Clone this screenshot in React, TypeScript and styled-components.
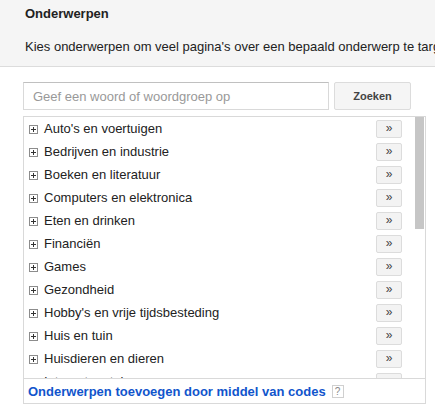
import styled, { createGlobalStyle } from 'styled-components';

const GlobalStyle = createGlobalStyle`
  html, body {
    margin: 0;
    padding: 0;
    background: #fff;
    overflow: hidden;
  }
  body {
    font-family: Arial, "Liberation Sans", sans-serif;
    color: #222;
  }
`;

const Page = styled.div`
  width: 435px;
  height: 412px;
  overflow: hidden;
`;

const Header = styled.div`
  background: #f5f5f5;
  border-bottom: 1px solid #dcdcdc;
  padding: 6px 0 10px 25px;
  height: 50px;
  white-space: nowrap;
`;

const Title = styled.div`
  font-size: 13px;
  font-weight: bold;
  line-height: 16px;
  color: #222;
`;

const Description = styled.div`
  margin-top: 17px;
  font-size: 13px;
  line-height: 16px;
  color: #222;
`;

const Content = styled.div`
  padding: 15px 0 0 23px;
`;

const SearchRow = styled.div`
  display: flex;
  gap: 5px;
  height: 28px;
`;

const SearchInput = styled.input`
  box-sizing: border-box;
  width: 306px;
  height: 28px;
  border: 1px solid #d9d9d9;
  border-top-color: #c0c0c0;
  padding: 0 9px;
  font-family: Arial, "Liberation Sans", sans-serif;
  font-size: 13px;
  color: #222;
  outline: none;

  &::placeholder {
    color: #999;
  }
`;

const SearchButton = styled.button`
  box-sizing: border-box;
  width: 77px;
  height: 28px;
  background: #f5f5f5;
  border: 1px solid #dcdcdc;
  border-radius: 2px;
  font-family: Arial, "Liberation Sans", sans-serif;
  font-size: 11px;
  font-weight: bold;
  color: #444;
  padding: 0;
`;

const ListBox = styled.div`
  margin-top: 6px;
  width: 403px;
  box-sizing: border-box;
  border: 1px solid #d9d9d9;
`;

const ListBody = styled.div`
  display: flex;
  height: 261px;
`;

const ScrollArea = styled.div`
  flex: 1;
  overflow-y: auto;
  scrollbar-width: none;

  &::-webkit-scrollbar {
    display: none;
  }
`;

const ScrollTrack = styled.div`
  flex: none;
  width: 10px;
  padding-right: 1px;
  box-sizing: border-box;
  background: #fff;
`;

const ScrollThumb = styled.div`
  height: 112px;
  background: #c6c6c6;
`;

const Row = styled.div`
  display: flex;
  align-items: center;
  height: 23px;
  padding: 0 13px 0 5px;
`;

const Expander = styled.svg`
  flex: none;
  width: 9px;
  height: 9px;
  margin-top: 2px;
`;

const Label = styled.span`
  flex: 1;
  margin-left: 6px;
  font-size: 13px;
  color: #222;
  white-space: nowrap;
`;

const AddButton = styled.button`
  box-sizing: border-box;
  width: 26px;
  height: 18px;
  padding: 0 0 2px;
  background: #f3f3f3;
  border: 1px solid #dcdcdc;
  border-radius: 2px;
  font-family: Arial, "Liberation Sans", sans-serif;
  font-size: 12px;
  line-height: 14px;
  color: #444;
`;

const Footer = styled.div`
  display: flex;
  align-items: center;
  gap: 6px;
  height: 24px;
  border-top: 1px solid #d9d9d9;
  padding-left: 4px;
`;

const CodeLink = styled.a`
  font-size: 13px;
  font-weight: bold;
  color: #1155cc;
  text-decoration: none;
  white-space: nowrap;
`;

const HelpBadge = styled.span`
  box-sizing: border-box;
  width: 12px;
  height: 13px;
  border: 1px solid #d0d0d0;
  font-size: 10px;
  line-height: 11px;
  text-align: center;
  color: #888;
  margin-top: 1px;
`;

const topics = [
  "Auto's en voertuigen",
  'Bedrijven en industrie',
  'Boeken en literatuur',
  'Computers en elektronica',
  'Eten en drinken',
  'Financiën',
  'Games',
  'Gezondheid',
  "Hobby's en vrije tijdsbesteding",
  'Huis en tuin',
  'Huisdieren en dieren',
  'Internet en telecom',
  'Kunst en entertainment',
  'Mensen en de maatschappij',
  'Naslagwerken',
  'Nieuws',
  "Online community's",
  'Onroerend goed',
  'Recht en overheid',
  'Reizen',
  'Schoonheid en fitness',
  'Sport',
  'Werk en onderwijs',
  'Wereldwijde locaties',
  'Wetenschap',
  'Winkelen',
];

const PlusBox = () => (
  <Expander viewBox="0 0 9 9">
    <rect x="0.5" y="0.5" width="8" height="8" fill="#fff" stroke="#8c8c8c" />
    <path d="M2 4.5h5M4.5 2v5" stroke="#333" strokeWidth="1" />
  </Expander>
);

export default function App() {
  return (
    <Page>
      <GlobalStyle />
      <Header>
        <Title>Onderwerpen</Title>
        <Description>
          Kies onderwerpen om veel pagina's over een bepaald onderwerp te targeten.
        </Description>
      </Header>
      <Content>
        <SearchRow>
          <SearchInput placeholder="Geef een woord of woordgroep op" />
          <SearchButton>Zoeken</SearchButton>
        </SearchRow>
        <ListBox>
          <ListBody>
            <ScrollArea>
              {topics.map((topic) => (
                <Row key={topic}>
                  <PlusBox />
                  <Label>{topic}</Label>
                  <AddButton>»</AddButton>
                </Row>
              ))}
            </ScrollArea>
            <ScrollTrack>
              <ScrollThumb />
            </ScrollTrack>
          </ListBody>
          <Footer>
            <CodeLink href="#">Onderwerpen toevoegen door middel van codes</CodeLink>
            <HelpBadge>?</HelpBadge>
          </Footer>
        </ListBox>
      </Content>
    </Page>
  );
}
